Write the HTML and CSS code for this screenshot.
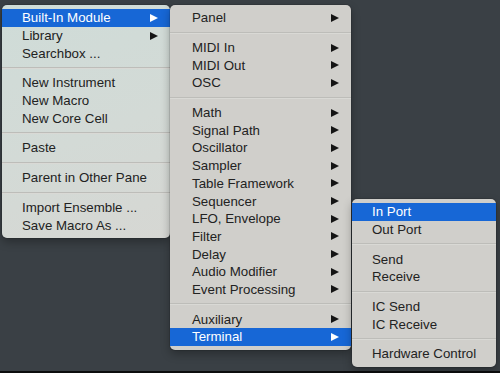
FILE: index.html
```html
<!DOCTYPE html>
<html lang="en">
	<head>
		<meta charset="UTF-8" />
		<meta name="viewport" content="width=device-width, initial-scale=1.0" />
		<title>Context Menu</title>
		<link rel="stylesheet" href="styles.css">
	</head>
	<body>
		<div class="screen">
			<!-- main context menu -->
			<div class="menu menu-main">
				<div class="item active sub">Built-In Module</div>
				<div class="item sub">Library</div>
				<div class="item">Searchbox ...</div>
				<div class="sep"></div>
				<div class="item">New Instrument</div>
				<div class="item">New Macro</div>
				<div class="item">New Core Cell</div>
				<div class="sep"></div>
				<div class="item">Paste</div>
				<div class="sep"></div>
				<div class="item">Parent in Other Pane</div>
				<div class="sep"></div>
				<div class="item">Import Ensemble ...</div>
				<div class="item">Save Macro As ...</div>
			</div>

			<!-- Built-In Module submenu -->
			<div class="menu menu-modules">
				<div class="item sub">Panel</div>
				<div class="sep"></div>
				<div class="item sub">MIDI In</div>
				<div class="item sub">MIDI Out</div>
				<div class="item sub">OSC</div>
				<div class="sep"></div>
				<div class="item sub">Math</div>
				<div class="item sub">Signal Path</div>
				<div class="item sub">Oscillator</div>
				<div class="item sub">Sampler</div>
				<div class="item sub">Table Framework</div>
				<div class="item sub">Sequencer</div>
				<div class="item sub">LFO, Envelope</div>
				<div class="item sub">Filter</div>
				<div class="item sub">Delay</div>
				<div class="item sub">Audio Modifier</div>
				<div class="item sub">Event Processing</div>
				<div class="sep"></div>
				<div class="item sub">Auxiliary</div>
				<div class="item active sub">Terminal</div>
			</div>

			<!-- Terminal submenu -->
			<div class="menu menu-terminal">
				<div class="item active">In Port</div>
				<div class="item">Out Port</div>
				<div class="sep"></div>
				<div class="item">Send</div>
				<div class="item">Receive</div>
				<div class="sep"></div>
				<div class="item">IC Send</div>
				<div class="item">IC Receive</div>
				<div class="sep"></div>
				<div class="item">Hardware Control</div>
			</div>
		</div>
	</body>
</html>
```

FILE: styles.css
```css
html,
body {
	margin: 0;
	padding: 0;
}
body {
	font-family: "Liberation Sans", Arial, sans-serif;
	background: #3a4045;
	width: 500px;
	height: 373px;
	overflow: hidden;
}
.screen {
	position: relative;
	width: 500px;
	height: 371px;
	border-bottom: 2px solid #0c0d0e;
	background: #3a4045;
}
.menu {
	position: absolute;
	box-sizing: border-box;
	padding: 4px 0;
	background: #d0cfcb;
	border-radius: 5px;
	box-shadow: 0 0 0 1px rgba(0, 0, 0, 0.1), 0 4px 10px rgba(0, 0, 0, 0.3);
	display: flex;
	flex-direction: column;
}
.menu-main {
	left: 2px;
	top: 5px;
	width: 168px;
	background: linear-gradient(160deg, #cfdcd8 0%, #d3dad6 55%, #d6d7d3 100%);
}
.menu-modules {
	left: 170px;
	top: 5px;
	width: 181px;
}
.menu-terminal {
	left: 352px;
	top: 199px;
	width: 144px;
}
.item {
	display: flex;
	align-items: center;
	height: 17.7px;
	padding: 0 12px 0 20px;
	font-size: 13.3px;
	color: #222;
	white-space: nowrap;
}
.menu-modules .item {
	padding-left: 22px;
}
.item.sub::after {
	content: "";
	margin-left: auto;
	width: 0;
	height: 0;
	border-top: 4.5px solid transparent;
	border-bottom: 4.5px solid transparent;
	border-left: 8px solid #141414;
}
.item.active {
	background: #1767d6;
	color: #fff;
}
.item.active.sub::after {
	border-left-color: #fff;
}
.sep {
	height: 12px;
	display: flex;
	align-items: center;
}
.sep::before {
	content: "";
	flex: 1;
	height: 1px;
	background: #bdbdb9;
	border-bottom: 1px solid #d9d9d5;
}
```
